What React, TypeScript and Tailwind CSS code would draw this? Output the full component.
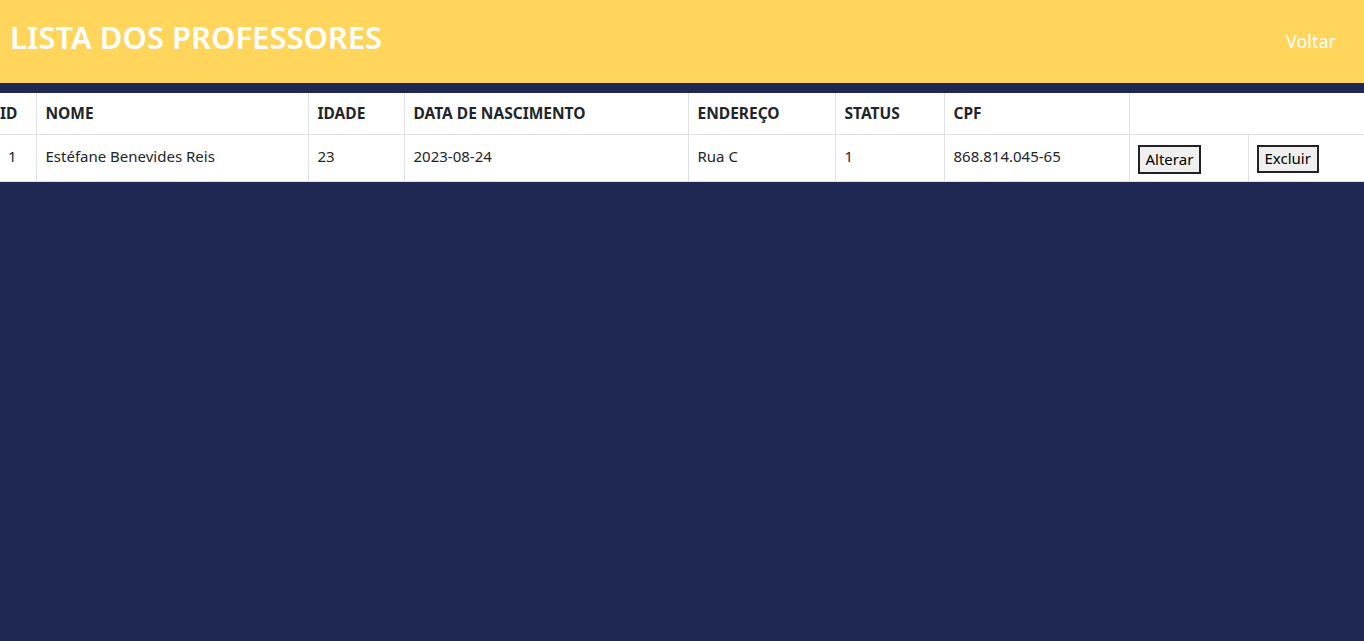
const cols = [
  { label: "ID", w: "w-[36px]" },
  { label: "NOME", w: "w-[272px]" },
  { label: "IDADE", w: "w-[96px]" },
  { label: "DATA DE NASCIMENTO", w: "w-[284px]" },
  { label: "ENDEREÇO", w: "w-[147px]" },
  { label: "STATUS", w: "w-[109px]" },
  { label: "CPF", w: "w-[185px]" },
];

const row = ["1", "Estéfane Benevides Reis", "23", "2023-08-24", "Rua C", "1", "868.814.045-65"];

const App = () => {
  return (
    <div className="min-h-[641px] bg-[#1e2852] font-['Noto_Sans',sans-serif] text-[#212529]">
      <header className="flex h-[83px] items-center justify-between bg-[#ffd55b] pl-[10px] pr-[28px]">
        <h1 className="pb-[8px] text-[31px] font-semibold leading-none text-white">LISTA DOS PROFESSORES</h1>
        <a className="text-[18px] text-white">Voltar</a>
      </header>
      <div className="pt-[10px]">
        <table className="w-[1364px] table-fixed border-collapse bg-white text-[15px]">
          <colgroup>
            {cols.map((c) => (
              <col key={c.label} className={c.w} />
            ))}
            <col className="w-[119px]" />
            <col className="w-[116px]" />
          </colgroup>
          <thead>
            <tr className="h-[41px] border-b border-[#dee2e6]">
              {cols.map((c, i) => (
                <th
                  key={c.label}
                  className={`border-r border-[#dee2e6] text-left text-[15.5px] font-bold ${i === 0 ? "pl-0" : "pl-[9px]"}`}
                >
                  {c.label}
                </th>
              ))}
              <th colSpan={2} />
            </tr>
          </thead>
          <tbody>
            <tr className="h-[47px] border-b border-[#dee2e6]">
              {row.map((v, i) => (
                <td key={i} className={`border-r border-[#dee2e6] pb-[2px] ${i === 0 ? "pl-[8px]" : "pl-[9px]"}`}>
                  {v}
                </td>
              ))}
              <td className="border-r border-[#dee2e6] pl-[8px] pt-[3px]">
                <button className="h-[29px] border-2 border-[#222] bg-[#efefef] px-[6px] text-[15px] text-black">
                  Alterar
                </button>
              </td>
              <td className="pl-[8px] pt-[2px]">
                <button className="h-[28px] border-2 border-[#222] bg-[#efefef] px-[6px] text-[15px] text-black">
                  Excluir
                </button>
              </td>
            </tr>
          </tbody>
        </table>
      </div>
    </div>
  );
};

export default App;
